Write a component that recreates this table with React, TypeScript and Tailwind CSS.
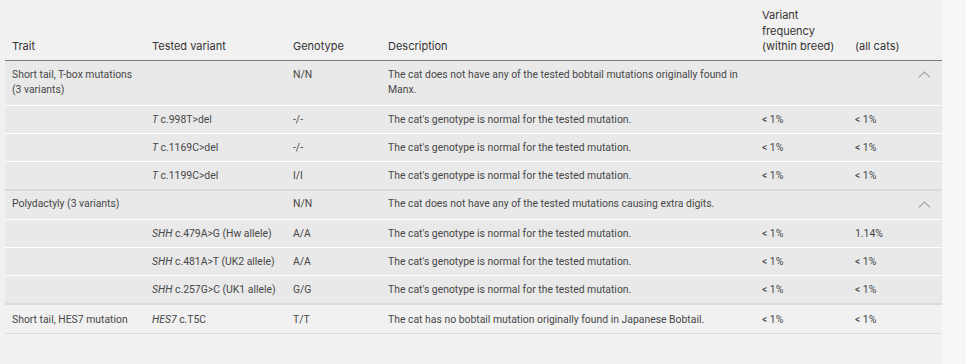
import React from "react";

type Sub = { gene: string; rest: string; geno: string; desc: string; breed: string; all: string };

const Chevron = () => (
  <svg width="13" height="7" viewBox="0 0 13 7" className="block">
    <path d="M0.8 6.4 L6.5 1 L12.2 6.4" fill="none" stroke="#a3a3a3" strokeWidth="1.1" />
  </svg>
);

const normal = "The cat's genotype is normal for the tested mutation.";

const tbox: Sub[] = [
  { gene: "T", rest: " c.998T>del", geno: "-/-", desc: normal, breed: "< 1%", all: "< 1%" },
  { gene: "T", rest: " c.1169C>del", geno: "-/-", desc: normal, breed: "< 1%", all: "< 1%" },
  { gene: "T", rest: " c.1199C>del", geno: "I/I", desc: normal, breed: "< 1%", all: "< 1%" },
];

const poly: Sub[] = [
  { gene: "SHH", rest: " c.479A>G (Hw allele)", geno: "A/A", desc: normal, breed: "< 1%", all: "1.14%" },
  { gene: "SHH", rest: " c.481A>T (UK2 allele)", geno: "A/A", desc: normal, breed: "< 1%", all: "< 1%" },
  { gene: "SHH", rest: " c.257G>C (UK1 allele)", geno: "G/G", desc: normal, breed: "< 1%", all: "< 1%" },
];

const td = "px-[7px] py-[6px] align-top";
const gtd = "px-[7px] pt-[5px] pb-[8px] align-top";
const ltd = "px-[7px] pt-[7px] pb-[6px] align-top";
const th = "px-[7px] pt-[8px] pb-[5px] text-left font-normal align-bottom";

function SubRows({ rows }: { rows: Sub[] }) {
  return (
    <>
      {rows.map((r, i) => (
        <tr key={i} className="bg-[#e9e9e9] border-t border-white">
          <td className={td}></td>
          <td className={td + " whitespace-nowrap"}>
            <i>{r.gene}</i>
            {r.rest}
          </td>
          <td className={td}>{r.geno}</td>
          <td className={td}>{r.desc}</td>
          <td className={td}>{r.breed}</td>
          <td className={td}>{r.all}</td>
          <td className={td}></td>
        </tr>
      ))}
    </>
  );
}

export default function App() {
  return (
    <div className="flex w-[966px] h-[364px] bg-[#f1f1f1]">
      <div className="w-[942px] pl-[5px]">
        <table
          className="table-fixed w-[937px] border-collapse text-[10.4px] leading-[15px] text-[#474747]"
          style={{ fontFamily: "Roboto, 'Liberation Sans', sans-serif" }}
        >
          <colgroup>
            <col className="w-[140px]" />
            <col className="w-[141px]" />
            <col className="w-[95px]" />
            <col className="w-[374px]" />
            <col className="w-[93px]" />
            <col className="w-[57px]" />
            <col className="w-[37px]" />
          </colgroup>
          <thead>
            <tr
              className="border-b border-[#7a7a7a] text-[11px] leading-[15.5px] text-[#333]"
              style={{ fontFamily: "Inter, 'Open Sans', sans-serif" }}
            >
              <th className={th}>Trait</th>
              <th className={th}>Tested variant</th>
              <th className={th}>Genotype</th>
              <th className={th}>Description</th>
              <th className={th + " whitespace-nowrap"}>
                Variant
                <br />
                frequency
                <br />
                (within breed)
              </th>
              <th className={th + " whitespace-nowrap"}>(all cats)</th>
              <th></th>
            </tr>
          </thead>
          <tbody>
            <tr className="bg-[#e9e9e9]">
              <td className={gtd + " pt-[6px]"}>
                Short tail, T-box mutations
                <br />
                (3 variants)
              </td>
              <td className={gtd + " pt-[6px]"}></td>
              <td className={gtd + " pt-[6px]"}>N/N</td>
              <td className={gtd + " pt-[6px]"}>
                The cat does not have any of the tested bobtail mutations originally found in
                <br />
                Manx.
              </td>
              <td className={gtd}></td>
              <td className={gtd}></td>
              <td className="pl-[13px] pt-[10px] align-top">
                <Chevron />
              </td>
            </tr>
            <SubRows rows={tbox} />
            <tr className="bg-[#e9e9e9] border-t-2 border-[#dadada]">
              <td className={gtd}>Polydactyly (3 variants)</td>
              <td className={gtd}></td>
              <td className={gtd}>N/N</td>
              <td className={gtd}>The cat does not have any of the tested mutations causing extra digits.</td>
              <td className={gtd}></td>
              <td className={gtd}></td>
              <td className="pl-[13px] pt-[10px] align-top">
                <Chevron />
              </td>
            </tr>
            <SubRows rows={poly} />
            <tr className="border-t-2 border-[#dadada] border-b border-b-[#dcdcdc]">
              <td className={ltd}>Short tail, HES7 mutation</td>
              <td className={ltd + " whitespace-nowrap"}>
                <i>HES7</i> c.T5C
              </td>
              <td className={ltd}>T/T</td>
              <td className={ltd}>The cat has no bobtail mutation originally found in Japanese Bobtail.</td>
              <td className={ltd}>&lt; 1%</td>
              <td className={ltd}>&lt; 1%</td>
              <td className={ltd}></td>
            </tr>
          </tbody>
        </table>
      </div>
      <div className="flex-1 bg-[#f6f6f6]"></div>
    </div>
  );
}
